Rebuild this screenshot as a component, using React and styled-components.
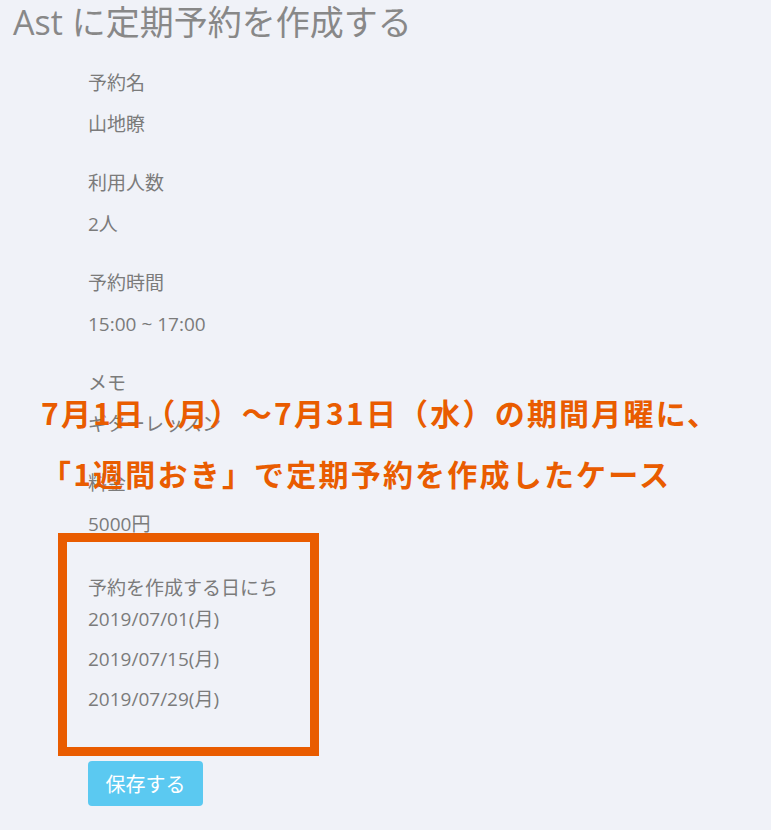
import React from "react";
import styled, { createGlobalStyle } from "styled-components";

// ---------- STYLES ----------
const GlobalStyle = createGlobalStyle`
  body {
    margin: 0;
    background: #f0f2f8;
    font-family: "Open Sans", "Noto Sans CJK JP", sans-serif;
    color: #7b7b7b;
  }
`;

const Page = styled.div`
  position: relative;
  min-height: 830px;
  padding: 0 13px;
  box-sizing: border-box;
`;

const Title = styled.h1`
  margin: 0;
  padding-top: 2px;
  font-size: 34px;
  line-height: 40px;
  font-weight: 400;
  color: #888;
`;

const Form = styled.div`
  display: flex;
  flex-direction: column;
  align-items: flex-start;
  padding: 29px 0 0 75px;
`;

const Field = styled.div`
  display: flex;
  flex-direction: column;
  gap: 17px;
  margin-bottom: 35px;
  position: relative;
  font-size: 19px;
  line-height: 24px;
`;

const DateField = styled(Field)`
  gap: 16px;
  margin-top: 5px;
  margin-bottom: 50px;
  align-self: stretch;

  &::before {
    content: "";
    position: absolute;
    left: -30px;
    top: -43px;
    bottom: -45px;
    width: 261px;
    border: 9px solid #e95c00;
    box-sizing: border-box;
    pointer-events: none;
  }
`;

const Label = styled.div`
  margin-bottom: ${(p) => (p.$tight ? "-9px" : "0")};
`;

const Value = styled.div``;

const SaveButton = styled.button`
  width: 115px;
  height: 45px;
  border: none;
  border-radius: 4px;
  background: #5bc9f1;
  color: #fff;
  font-family: inherit;
  font-size: 20px;
  cursor: pointer;
`;

const Note = styled.div`
  position: absolute;
  left: 41px;
  top: 382px;
  color: #e95c00;
  font-family: "Noto Sans CJK JP", sans-serif;
  font-weight: 700;
  font-size: 30px;
  line-height: 61px;
  letter-spacing: 2.2px;
  white-space: nowrap;
`;

// ---------- COMPONENT ----------
const fields = [
  { label: "予約名", value: "山地瞭" },
  { label: "利用人数", value: "2人" },
  { label: "予約時間", value: "15:00 ~ 17:00" },
  { label: "メモ", value: "ギターレッスン" },
  { label: "料金", value: "5000円" },
];

const dates = ["2019/07/01(月)", "2019/07/15(月)", "2019/07/29(月)"];

function App() {
  return (
    <Page>
      <GlobalStyle />
      <Title>Ast に定期予約を作成する</Title>

      <Form>
        {fields.map((f) => (
          <Field key={f.label}>
            <Label>{f.label}</Label>
            <Value>{f.value}</Value>
          </Field>
        ))}

        <DateField>
          <Label $tight>予約を作成する日にち</Label>
          {dates.map((d) => (
            <Value key={d}>{d}</Value>
          ))}
        </DateField>

        <SaveButton>保存する</SaveButton>
      </Form>

      {/* annotation over the page */}
      <Note>
        7月1日（月）〜7月31日（水）の期間月曜に、
        <br />
        「1週間おき」で定期予約を作成したケース
      </Note>
    </Page>
  );
}

export default App;
